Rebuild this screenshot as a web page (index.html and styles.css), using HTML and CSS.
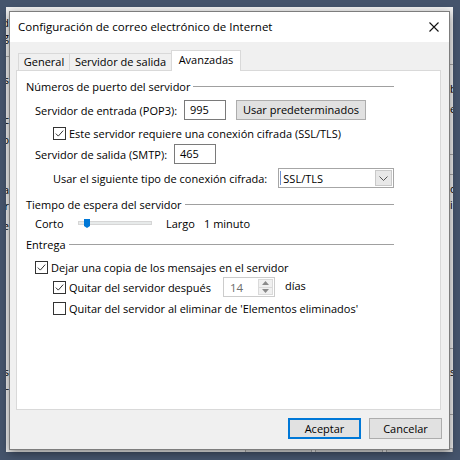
FILE: index.html
```html
<!DOCTYPE html>
<html lang="es">
  <head>
    <meta charset="UTF-8" />
    <meta name="viewport" content="width=device-width, initial-scale=1.0" />
    <title>Configuración de correo</title>
    <link rel="stylesheet" href="styles.css">
  </head>
  <body>
    <div class="desktop">
      <!-- ventana de cuentas, detras del dialogo -->
      <div class="backwin">
        <div class="back-cols">
          <div class="back-left">
            <div class="frag" style="margin-top: 9px">Nombre d</div>
            <div class="frag">Configuración g</div>
            <div class="hline" style="margin-top: 12px"></div>
            <div class="frag" style="margin-top: 16px">Servicios</div>
            <div class="frag" style="margin-top: 26px">Tipo de c</div>
            <div class="frag" style="margin-top: 6px">Servidor o</div>
            <div class="frag" style="margin-top: 36px">Contraseña</div>
            <div class="frag" style="margin-top: 2px">Recordar</div>
            <div class="frag" style="margin-top: 6px">Requerir e</div>
            <div class="frag" style="margin-top: 132px">Cuentas</div>
            <div class="frag">SSL</div>
          </div>
          <div class="back-right">
            <div class="hline" style="margin-top: 57px"></div>
            <div class="frag" style="margin-top: 17px">buzón</div>
            <div class="frag" style="margin-top: 6px">entrada</div>
            <div class="hline" style="margin-top: 38px"></div>
            <div class="hline" style="margin-top: 19px"></div>
            <div class="frag" style="margin-top: 7px">opciones</div>
            <div class="frag" style="margin-top: 2px">inicio</div>
            <div class="hline" style="margin-top: 136px"></div>
            <div class="frag" style="margin-top: 16px">s</div>
            <div class="hline" style="margin-top: 35px"></div>
          </div>
        </div>
        <div class="back-buttons">
          <div class="back-btn">Atrás</div>
          <div class="back-btn">Siguiente</div>
          <div class="back-btn">Cancelar</div>
        </div>
      </div>

      <div class="dialog">
        <div class="titlebar">
          <span class="title">Configuración de correo electrónico de Internet</span>
          <svg class="close" width="10" height="10" viewBox="0 0 10 10">
            <path d="M0.5 0.5 L9.5 9.5 M9.5 0.5 L0.5 9.5" stroke="#111" stroke-width="1.1" fill="none" />
          </svg>
        </div>
        <div class="dlg-body">
          <div class="tabs">
            <div class="tab t-general">General</div>
            <div class="tab t-salida">Servidor de salida</div>
            <div class="tab t-avanz active">Avanzadas</div>
          </div>

          <div class="panel">
            <div class="group">
              <div class="legend legend-1"><span>Números de puerto del servidor</span></div>

              <div class="row row-pop">
                <div class="lbl lbl-pop">Servidor de entrada (POP3):</div>
                <div class="textbox">995</div>
                <div class="btn btn-defaults">Usar predeterminados</div>
              </div>

              <div class="row row-ssl indent">
                <svg class="chk" width="13" height="13" viewBox="0 0 13 13">
                  <rect x="0.5" y="0.5" width="12" height="12" fill="#fff" stroke="#333" />
                  <path d="M2.8 6.6 L5.3 9.1 L10.2 3.6" stroke="#333" stroke-width="1" fill="none" />
                </svg>
                <span>Este servidor requiere una conexión cifrada (SSL/TLS)</span>
              </div>

              <div class="row row-smtp">
                <div class="lbl lbl-smtp">Servidor de salida (SMTP):</div>
                <div class="textbox">465</div>
              </div>

              <div class="row row-cipher indent">
                <div class="lbl lbl-cipher">Usar el siguiente tipo de conexión cifrada:</div>
                <div class="combo">
                  <span class="caret"></span>
                  <span class="combo-val">SSL/TLS</span>
                  <span class="combo-btn">
                    <svg width="9" height="5" viewBox="0 0 9 5">
                      <path d="M0.5 0.5 L4.5 4.5 L8.5 0.5" stroke="#555" stroke-width="1" fill="none" />
                    </svg>
                  </span>
                </div>
              </div>

              <div class="legend legend-2"><span>Tiempo de espera del servidor</span></div>

              <div class="row row-slider">
                <div class="lbl lbl-corto">Corto</div>
                <div class="slider">
                  <div class="track"></div>
                  <svg class="thumb" width="6" height="9" viewBox="0 0 6 9">
                    <path d="M0 0 H6 V7 L3 9 L0 7 Z" fill="#0078d7" />
                  </svg>
                </div>
                <div class="lbl lbl-largo">Largo</div>
                <div class="lbl">1 minuto</div>
              </div>

              <div class="legend legend-3"><span>Entrega</span></div>

              <div class="row row-copy">
                <svg class="chk" width="13" height="13" viewBox="0 0 13 13">
                  <rect x="0.5" y="0.5" width="12" height="12" fill="#fff" stroke="#333" />
                  <path d="M2.8 6.6 L5.3 9.1 L10.2 3.6" stroke="#333" stroke-width="1" fill="none" />
                </svg>
                <span>Dejar una copia de los mensajes en el servidor</span>
              </div>

              <div class="row row-after indent">
                <div class="chk-wrap">
                  <svg class="chk" width="13" height="13" viewBox="0 0 13 13">
                    <rect x="0.5" y="0.5" width="12" height="12" fill="#fff" stroke="#333" />
                    <path d="M2.8 6.6 L5.3 9.1 L10.2 3.6" stroke="#333" stroke-width="1" fill="none" />
                  </svg>
                  <span>Quitar del servidor después</span>
                </div>
                <div class="spin">
                  <span class="spin-val">14</span>
                  <span class="spin-btns">
                    <span class="spin-up">
                      <svg width="7" height="4" viewBox="0 0 7 4"><path d="M0 4 L3.5 0 L7 4 Z" fill="#8a8a8a" /></svg>
                    </span>
                    <span class="spin-down">
                      <svg width="7" height="4" viewBox="0 0 7 4"><path d="M0 0 L3.5 4 L7 0 Z" fill="#8a8a8a" /></svg>
                    </span>
                  </span>
                </div>
                <div class="lbl lbl-dias">días</div>
              </div>

              <div class="row row-deleted indent">
                <svg class="chk" width="13" height="13" viewBox="0 0 13 13">
                  <rect x="0.5" y="0.5" width="12" height="12" fill="#fff" stroke="#333" />
                </svg>
                <span>Quitar del servidor al eliminar de 'Elementos eliminados'</span>
              </div>
            </div>
          </div>

          <div class="buttons">
            <div class="btn btn-dlg default">Aceptar</div>
            <div class="btn btn-dlg">Cancelar</div>
          </div>
        </div>
      </div>
    </div>
  </body>
</html>
```

FILE: styles.css
```css
* {
  box-sizing: border-box;
}
body {
  margin: 0;
  background-color: #45546c;
  font-family: "Segoe UI", "Open Sans", "Noto Sans", sans-serif;
  font-size: 11px;
  color: #000;
}
.desktop {
  position: relative;
  width: 460px;
  height: 460px;
  overflow: hidden;
}

/* ventana de atras */
.backwin {
  position: absolute;
  left: 6px;
  top: 7px;
  width: 447px;
  height: 445px;
  background-color: #f0f0f0;
  overflow: hidden;
  display: flex;
  flex-direction: column;
}
.back-cols {
  flex: 1;
  display: flex;
  justify-content: space-between;
}
.back-left {
  width: 3px;
  display: flex;
  flex-direction: column;
}
.back-left .frag {
  display: flex;
  justify-content: flex-end;
  white-space: nowrap;
  line-height: 14px;
}
.back-right {
  width: 3px;
  display: flex;
  flex-direction: column;
}
.back-right .frag {
  white-space: nowrap;
  line-height: 14px;
}
.hline {
  height: 1px;
  width: 30px;
  background-color: #a9a9a9;
}
.back-left .hline {
  margin-left: -27px;
}
.back-buttons {
  display: flex;
  gap: 3px;
  padding-left: 239px;
  height: 4px;
  align-items: flex-start;
}
.back-btn {
  width: 72px;
  height: 20px;
  background-color: #e1e1e1;
  border: 1px solid #adadad;
  text-align: center;
  color: #888;
  font-size: 10px;
}

/* dialogo */
.dialog {
  position: absolute;
  left: 9px;
  top: 11px;
  width: 441px;
  height: 439px;
  border: 1px solid #7d7d7d;
  background-color: #f0f0f0;
  box-shadow: 0 3px 9px rgba(0, 0, 0, 0.45);
  display: flex;
  flex-direction: column;
}
.titlebar {
  height: 30px;
  background-color: #fff;
  display: flex;
  align-items: center;
  justify-content: space-between;
  padding: 0 10px 1px 8px;
}
.title {
  font-size: 11.5px;
}
.close {
  display: block;
}
.dlg-body {
  flex: 1;
  display: flex;
  flex-direction: column;
}

.tabs {
  display: flex;
  align-items: flex-end;
  height: 28px;
  padding-left: 8px;
  position: relative;
  z-index: 1;
}
.tab {
  height: 17px;
  border: 1px solid #d9d9d9;
  border-bottom: none;
  background-color: #f0f0f0;
  text-align: center;
  line-height: 16px;
  margin-left: -1px;
}
.tab:first-child {
  margin-left: 0;
}
.t-general {
  width: 52px;
}
.t-salida {
  width: 103px;
}
.t-avanz {
  width: 70px;
}
.tab.active {
  height: 21px;
  margin-bottom: -1px;
  background-color: #fff;
  line-height: 17px;
}

.panel {
  margin-left: 6px;
  width: 425px;
  height: 340px;
  border: 1px solid #d9d9d9;
  background-color: #fff;
  padding: 7px 0 0 9px;
}
.group {
  width: 368px;
  display: flex;
  flex-direction: column;
}
.legend {
  display: flex;
  align-items: center;
  height: 16px;
  white-space: nowrap;
}
.legend::after {
  content: "";
  flex: 1;
  height: 1px;
  margin-left: 3px;
  background-color: #a0a0a0;
}
.legend-2 {
  margin-top: 8px;
}
.legend-3 {
  margin-top: 5px;
}

.row {
  display: flex;
  align-items: center;
  padding-left: 9px;
  white-space: nowrap;
}
.row.indent {
  padding-left: 27px;
}
.chk {
  display: block;
  flex-shrink: 0;
  margin-right: 3px;
}
.row-pop {
  height: 20px;
  margin-top: 6px;
}
.row-ssl {
  height: 14px;
  margin-top: 6px;
}
.row-smtp {
  height: 20px;
  margin-top: 4px;
}
.row-cipher {
  height: 20px;
  margin-top: 4px;
}
.row-slider {
  height: 16px;
  margin-top: 3px;
}
.row-copy {
  height: 16px;
  margin-top: 7px;
}
.row-after {
  height: 20px;
  margin-top: 2px;
}
.row-deleted {
  height: 16px;
  margin-top: 3px;
}

.lbl-pop {
  width: 149px;
}
.lbl-smtp {
  width: 139px;
}
.lbl-cipher {
  width: 226px;
}
.textbox {
  width: 42px;
  height: 20px;
  border: 1px solid #7a7a7a;
  background-color: #fff;
  padding-left: 5px;
  line-height: 18px;
}
.btn {
  background-color: #e1e1e1;
  border: 1px solid #adadad;
  text-align: center;
}
.btn-defaults {
  width: 130px;
  height: 20px;
  line-height: 18px;
  margin-left: 10px;
}

.combo {
  width: 116px;
  height: 20px;
  border: 1px solid #a6a6a6;
  background-color: #fff;
  display: flex;
  align-items: center;
  padding: 0 1px 0 1px;
}
.caret {
  width: 1px;
  height: 14px;
  background-color: #6b8fd1;
  margin-right: 2px;
}
.combo-val {
  flex: 1;
}
.combo-btn {
  width: 17px;
  height: 16px;
  background-color: #e8e8e8;
  border: 1px solid #c9c9c9;
  display: flex;
  align-items: center;
  justify-content: center;
}
.combo-btn svg {
  display: block;
}

.lbl-corto {
  width: 43px;
}
.slider {
  width: 74px;
  height: 16px;
  position: relative;
  display: flex;
  align-items: center;
}
.track {
  width: 100%;
  height: 4px;
  background-color: #e7eaea;
  border: 1px solid #d6d6d6;
}
.thumb {
  position: absolute;
  left: 6px;
  top: 4px;
}
.lbl-largo {
  margin-left: 14px;
  width: 38px;
}

.chk-wrap {
  width: 170px;
  display: flex;
  align-items: center;
}
.spin {
  width: 52px;
  height: 20px;
  border: 1px solid #cccccc;
  background-color: #fff;
  display: flex;
  align-items: center;
  padding: 1px;
}
.spin-val {
  flex: 1;
  color: #6d6d6d;
  padding-left: 5px;
  font-size: 11.5px;
}
.spin-btns {
  width: 15px;
  height: 16px;
  display: flex;
  flex-direction: column;
  border: 1px solid #dadada;
  background-color: #f0f0f0;
}
.spin-up,
.spin-down {
  flex: 1;
  display: flex;
  align-items: center;
  justify-content: center;
}
.spin-up {
  border-bottom: 1px solid #dadada;
}
.spin-btns svg {
  display: block;
}
.lbl-dias {
  margin-left: 10px;
  margin-bottom: 4px;
}

.buttons {
  display: flex;
  justify-content: flex-end;
  gap: 8px;
  padding: 8px 7px 0 0;
}
.btn-dlg {
  width: 73px;
  height: 21px;
  line-height: 19px;
}
.btn-dlg.default {
  border: 2px solid #0078d7;
  line-height: 17px;
}
```
